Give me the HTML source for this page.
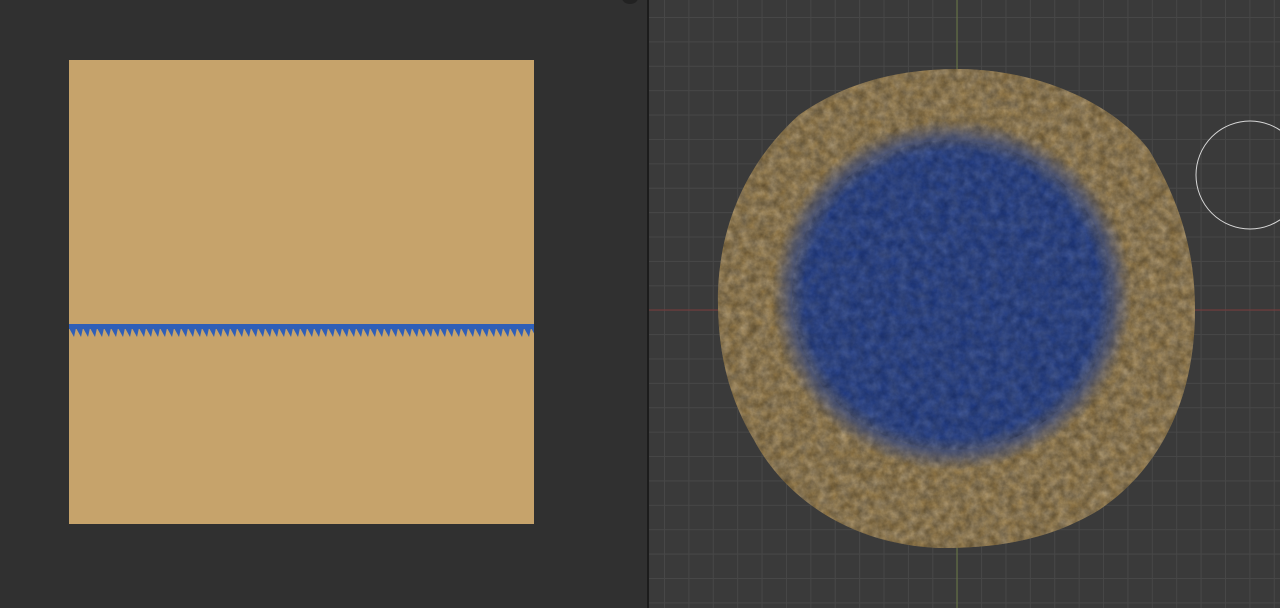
<!DOCTYPE html>
<html><head><style>
html,body{margin:0;padding:0;width:1280px;height:608px;overflow:hidden;background:#303030;font-family:"Liberation Sans",sans-serif}
#l{position:absolute;left:0;top:0;width:647px;height:608px;background:#303030}
#sq{position:absolute;left:69px;top:60px;width:465px;height:464px;background:#c6a36b}
#div{position:absolute;left:647px;top:0;width:2px;height:608px;background:#1c1c1c}
#r{position:absolute;left:649px;top:0;width:631px;height:608px;background-color:#3a3a3a;
background-image:linear-gradient(to right,#474747 1px,transparent 1px),linear-gradient(to bottom,#474747 1px,transparent 1px);
background-size:24.4px 24.4px;background-position:15px 17px}
</style></head><body>
<div id="l"><div id="sq"></div>
<svg style="position:absolute;left:69px;top:322px" width="465" height="17">
<defs><pattern id="t" width="7" height="17" patternUnits="userSpaceOnUse"><rect x="0" y="2" width="7" height="5" fill="#2f5fb8"/><path d="M0 6 L7 6 L5 15 Z" fill="#2f5fb8"/></pattern></defs>
<rect width="465" height="17" fill="url(#t)"/></svg>
<div style="position:absolute;left:622px;top:-8px;width:16px;height:12px;border-radius:50%;background:#222"></div>
</div>
<div id="div"></div>
<div id="r">
<svg width="631" height="608" style="position:absolute;left:0;top:0">
<defs>
<radialGradient id="b" cx="0.5" cy="0.5" r="0.5"><stop offset="0.82" stop-color="#233e88"/><stop offset="1" stop-color="#233e88" stop-opacity="0"/></radialGradient>
<filter id="n"><feTurbulence type="fractalNoise" baseFrequency="0.12" numOctaves="4" seed="3"/><feColorMatrix values="0 0 0 0 0  0 0 0 0 0  0 0 0 0 0  0 0 0 0.45 0"/><feComposite in2="SourceGraphic" operator="in"/></filter>
<filter id="w"><feTurbulence type="fractalNoise" baseFrequency="0.1" numOctaves="4" seed="7"/><feColorMatrix values="0 0 0 0 1  0 0 0 0 1  0 0 0 0 1  0 0 0 0.35 -0.05"/><feComposite in2="SourceGraphic" operator="in"/></filter>
</defs>
<line x1="308" y1="0" x2="308" y2="608" stroke="#6b7a45" stroke-width="1"/>
<line x1="0" y1="310" x2="631" y2="310" stroke="#7a3a3a" stroke-width="1"/>
<path d="M310 69 C400 70 470 110 500 150 C530 200 546 250 546 310 C546 400 510 470 450 510 C400 540 350 548 290 548 C210 545 140 505 105 440 C75 390 68 340 69 290 C72 220 100 160 150 115 C200 80 255 69 310 69 Z" fill="#a0834e"/>
<path d="M310 69 C400 70 470 110 500 150 C530 200 546 250 546 310 C546 400 510 470 450 510 C400 540 350 548 290 548 C210 545 140 505 105 440 C75 390 68 340 69 290 C72 220 100 160 150 115 C200 80 255 69 310 69 Z" fill="#fff" filter="url(#w)"/>
<path d="M310 69 C400 70 470 110 500 150 C530 200 546 250 546 310 C546 400 510 470 450 510 C400 540 350 548 290 548 C210 545 140 505 105 440 C75 390 68 340 69 290 C72 220 100 160 150 115 C200 80 255 69 310 69 Z" fill="#000" filter="url(#n)"/>
<ellipse cx="303" cy="295" rx="180" ry="175" fill="url(#b)"/>
<ellipse cx="303" cy="295" rx="160" ry="155" fill="#fff" filter="url(#w)" opacity="0.6"/>
<ellipse cx="303" cy="295" rx="160" ry="155" fill="#000" filter="url(#n)" opacity="0.6"/>
<circle cx="601" cy="175" r="54" fill="none" stroke="#d8d8d8" stroke-width="1"/>
</svg>
</div>
</body></html>
